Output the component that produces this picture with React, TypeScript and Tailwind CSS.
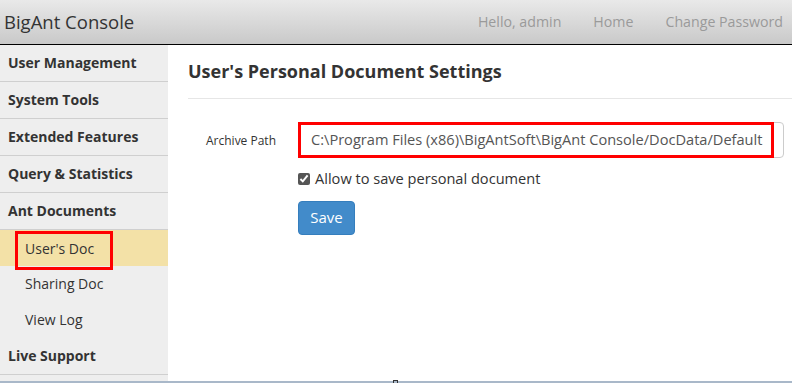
import React from "react";

const font = { fontFamily: '"Open Sans", "Noto Sans", Arial, sans-serif' };

function TopItem({ label }: { label: string }) {
  return (
    <div className="h-[37px] border-b border-[#cfcfcf] pl-2 pb-[2px] flex items-center text-[14px] font-bold text-[#333]">
      {label}
    </div>
  );
}

function SubItem({ label, active, boxed }: { label: string; active?: boolean; boxed?: boolean }) {
  return (
    <div className={`h-[36px] flex items-center pl-[15px] text-[14px] text-[#333] ${active ? "bg-[#f3e1a7]" : ""}`}>
      <span className={boxed ? "border-[3px] border-[#ff0000] h-[39px] w-[98px] flex items-center pl-[7px] mt-[5px] pb-[4px]" : "pl-[10px] pb-[2px]"}>
        {label}
      </span>
    </div>
  );
}

export default function App() {
  return (
    <div className="w-[792px] h-[383px] bg-white flex flex-col overflow-hidden" style={font}>
      <div className="h-[45px] shrink-0 border-b border-black bg-gradient-to-b from-[#e9e9e9] to-[#c9c9c9] flex items-center justify-between pl-[4px] pr-[9px]">
        <div className="text-[18.5px] text-[#333] -mt-[1px]">BigAnt Console</div>
        <div className="flex items-center gap-[32px] text-[14.2px] text-[#9a9a9a] -mt-[1px]">
          <span>Hello, admin</span>
          <span>Home</span>
          <span>Change Password</span>
        </div>
      </div>
      <div className="flex flex-1 min-h-0">
        <div className="w-[168px] shrink-0 bg-[#eeeeee] flex flex-col">
          <TopItem label="User Management" />
          <TopItem label="System Tools" />
          <TopItem label="Extended Features" />
          <TopItem label="Query & Statistics" />
          <TopItem label="Ant Documents" />
          <SubItem label="User's Doc" active boxed />
          <SubItem label="Sharing Doc" />
          <SubItem label="View Log" />
          <TopItem label="Live Support" />
        </div>
        <div className="flex-1 pl-[20px] flex flex-col">
          <div className="h-[54px] border-b border-[#e6e6e6] flex items-center text-[18px] font-bold text-[#333]">
            User's Personal Document Settings
          </div>
          <div className="flex items-start mt-[23px]">
            <div className="w-[110px] pl-[18px] pt-[10px] text-[12px] text-[#333]">Archive Path</div>
            <div className="flex flex-col">
              <div className="w-[486px] h-[36px] border border-[#cccccc] rounded-[4px] relative flex items-center">
                <div className="absolute left-[-1px] top-[-1px] w-[476px] h-[36px] border-[3px] border-[#ff0000]" />
                <span className="pl-[12px] text-[14.6px] text-[#555] whitespace-nowrap">
                  C:\Program Files (x86)\BigAntSoft\BigAnt Console/DocData/Default
                </span>
              </div>
              <label className="flex items-center gap-[5px] mt-[10px] text-[14.6px] text-[#333]">
                <input type="checkbox" defaultChecked className="w-[12px] h-[12px] accent-[#555]" />
                <span>Allow to save personal document</span>
              </label>
              <button className="mt-[11px] w-[57px] h-[34px] bg-[#428bca] border border-[#357ebd] rounded-[4px] text-white text-[15px] pb-[1px]">
                Save
              </button>
            </div>
          </div>
        </div>
      </div>
      <div className="h-[2px] shrink-0 bg-[#a9b8c9] relative">
        <div className="absolute left-[393px] top-[-1px] w-[5px] h-[3px] border border-[#333] border-b-0" />
      </div>
    </div>
  );
}
